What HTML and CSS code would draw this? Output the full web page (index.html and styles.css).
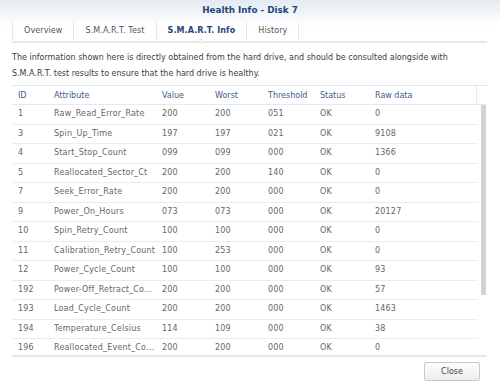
FILE: index.html
```html
<!DOCTYPE html>
<html>
    <head>
        <meta charset="utf-8"/>
        <title>Health Info - Disk 7</title>
        <link rel="stylesheet" href="styles.css">
    </head>

    <body>
        <div id="dialog">
            <div class="title">Health Info - Disk 7</div>

            <div class="tabs">
                <div class="tab">Overview</div>
                <div class="tab">S.M.A.R.T. Test</div>
                <div class="tab active">S.M.A.R.T. Info</div>
                <div class="tab">History</div>
            </div>

            <p class="desc">The information shown here is directly obtained from the hard drive, and should be consulted alongside with S.M.A.R.T. test results to ensure that the hard drive is healthy.</p>

            <div class="grid">
                <div class="row head">
                    <div>ID</div>
                    <div>Attribute</div>
                    <div>Value</div>
                    <div>Worst</div>
                    <div>Threshold</div>
                    <div>Status</div>
                    <div>Raw data</div>
                    <div class="filler"></div>
                </div>
                <div class="body">
                    <div class="rows" id="rows"></div>
                    <div class="scroll"><div class="thumb"></div></div>
                </div>
            </div>

            <div class="footer">
                <button class="btn">Close</button>
            </div>
        </div>

        <script>
            var attributes = [
                ["1", "Raw_Read_Error_Rate", "200", "200", "051", "OK", "0"],
                ["3", "Spin_Up_Time", "197", "197", "021", "OK", "9108"],
                ["4", "Start_Stop_Count", "099", "099", "000", "OK", "1366"],
                ["5", "Reallocated_Sector_Ct", "200", "200", "140", "OK", "0"],
                ["7", "Seek_Error_Rate", "200", "200", "000", "OK", "0"],
                ["9", "Power_On_Hours", "073", "073", "000", "OK", "20127"],
                ["10", "Spin_Retry_Count", "100", "100", "000", "OK", "0"],
                ["11", "Calibration_Retry_Count", "100", "253", "000", "OK", "0"],
                ["12", "Power_Cycle_Count", "100", "100", "000", "OK", "93"],
                ["192", "Power-Off_Retract_Count", "200", "200", "000", "OK", "57"],
                ["193", "Load_Cycle_Count", "200", "200", "000", "OK", "1463"],
                ["194", "Temperature_Celsius", "114", "109", "000", "OK", "38"],
                ["196", "Reallocated_Event_Count", "200", "200", "000", "OK", "0"]
            ];

            var rowsDiv = document.getElementById("rows");
            for (var i = 0; i < attributes.length; i++) {
                var row = document.createElement("div");
                row.className = "row";
                for (var j = 0; j < attributes[i].length; j++) {
                    var cell = document.createElement("div");
                    cell.textContent = attributes[i][j];
                    row.appendChild(cell);
                }
                rowsDiv.appendChild(row);
            }
        </script>
    </body>
</html>
```

FILE: styles.css
```css
html, body {
  margin: 0;
  padding: 0;
  background: #fff;
}

#dialog {
  width: 500px;
  height: 386px;
  display: flex;
  flex-direction: column;
  font-family: "DejaVu Sans", Verdana, sans-serif;
  font-size: 8px;
  color: #404040;
  background: linear-gradient(#e4eaf2, #fff 26px);
}

.title {
  height: 21px;
  line-height: 20px;
  text-align: center;
  font-weight: bold;
  font-size: 8.8px;
  color: #24457a;
}

.tabs {
  display: flex;
  height: 20px;
  margin: 0 13px 0 12px;
  border-bottom: 2px solid #e8e8e8;
}

.tab {
  position: relative;
  padding: 0 11px;
  line-height: 18px;
  margin-top: 1px;
  height: 18px;
  color: #555;
  letter-spacing: 0.1px;
  border-right: 1px solid #e3e8ef;
}

.tab:first-child {
  border-left: 1px solid #e3e8ef;
}

.tab.active {
  font-weight: bold;
  letter-spacing: 0.1px;
  color: #24457a;
}

/* little notch under the active tab */
.tab.active::after {
  content: "";
  position: absolute;
  left: 50%;
  bottom: -2px;
  margin-left: -4px;
  width: 0;
  height: 0;
  border-left: 4px solid transparent;
  border-right: 4px solid transparent;
  border-bottom: 4px solid #e8e8e8;
}

.tab.active::before {
  content: "";
  position: absolute;
  left: 50%;
  bottom: -2px;
  margin-left: -2px;
  width: 0;
  height: 0;
  border-left: 2px solid transparent;
  border-right: 2px solid transparent;
  border-bottom: 2px solid #fff;
  z-index: 1;
}

.desc {
  margin: 7px 12px 3px 12px;
  line-height: 16px;
  color: #3c3c3c;
}

.grid {
  margin: 0 13px 0 12px;
  border-top: 1px solid #dfe6ee;
  border-bottom: 2px solid #e8e8e8;
}

.row {
  display: grid;
  grid-template-columns: 36px 108px 53px 53px 52px 55px 109px;
  height: 19.5px;
  line-height: 16px;
  border-bottom: 1px solid #ececec;
  color: #666;
  box-sizing: border-box;
}

.row div {
  padding-left: 6px;
  padding-top: 1px;
  white-space: nowrap;
  overflow: hidden;
  text-overflow: ellipsis;
  letter-spacing: 0.2px;
}

.row.head {
  grid-template-columns: 36px 108px 53px 53px 52px 55px 107px 11px;
  height: 19px;
  line-height: 17px;
  color: #3d5d8a;
  border-bottom: 1px solid #e4eaf2;
}

.row.head div {
  letter-spacing: 0;
}

.row.head .filler {
  border-left: 1px solid #e4eaf2;
  padding: 0;
}

.body {
  display: flex;
  height: 250px;
  overflow: hidden;
}

.rows {
  width: 466px;
}

.scroll {
  width: 9px;
  padding-left: 3px;
  box-sizing: border-box;
}

.thumb {
  width: 5px;
  height: 190px;
  background: #d3d3d3;
}

.footer {
  display: flex;
  justify-content: flex-end;
  padding: 5px 20px 0 0;
}

.btn {
  width: 56px;
  height: 19px;
  font-family: "DejaVu Sans", Verdana, sans-serif;
  font-size: 8px;
  color: #444;
  background: linear-gradient(#fdfdfd, #ececec);
  border: 1px solid #c6cbd1;
  border-radius: 2px;
  padding: 0;
}
```
